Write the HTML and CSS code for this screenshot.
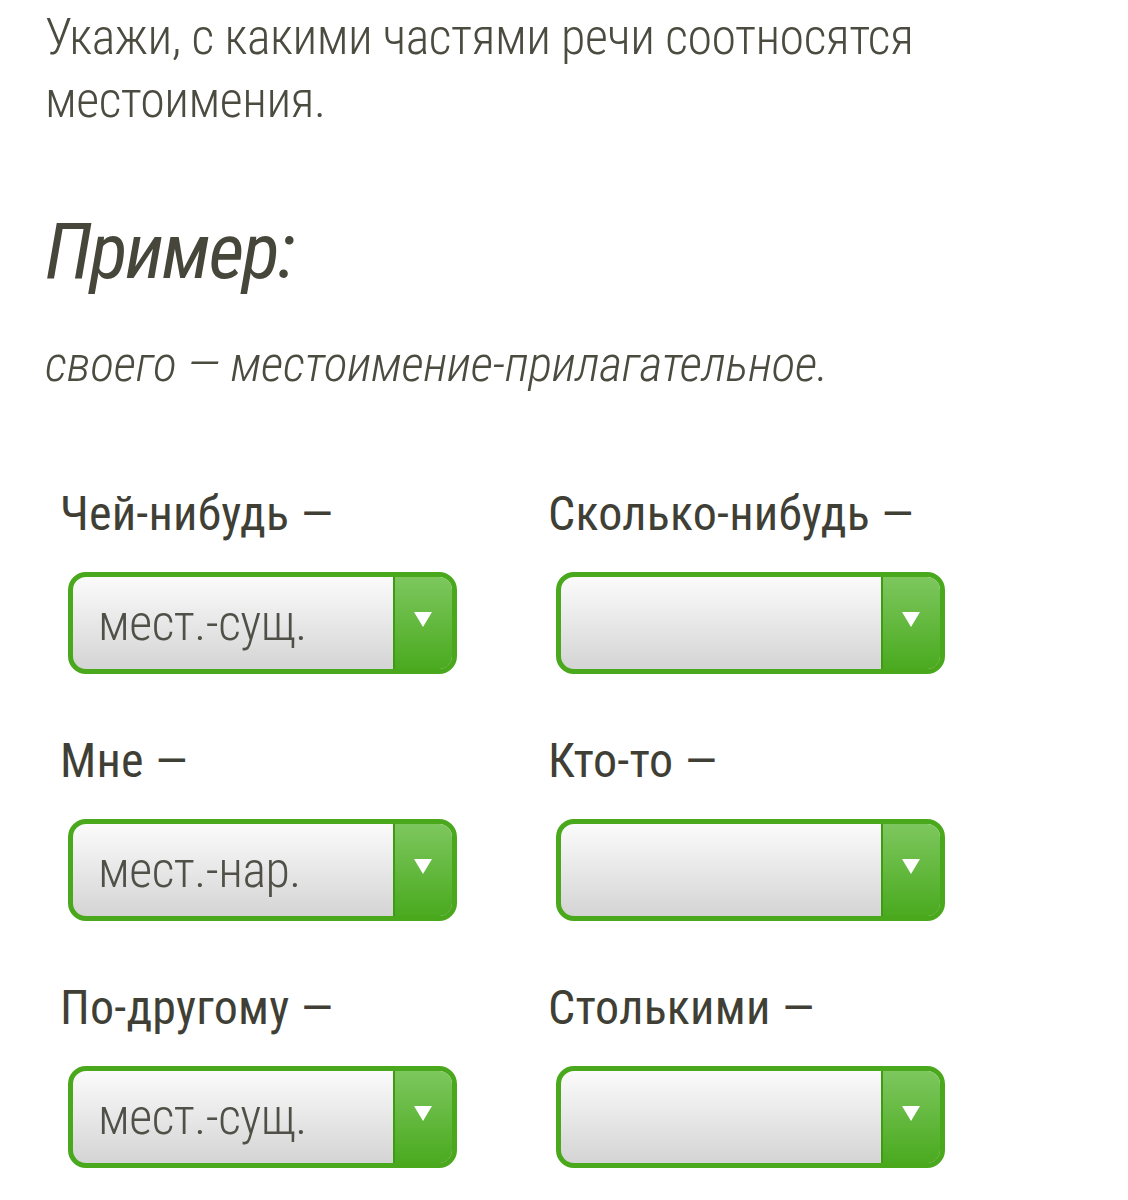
FILE: index.html
```html
<!DOCTYPE html>
<html lang="ru">
<head>
    <meta charset="UTF-8">
    <meta name="viewport" content="width=device-width, initial-scale=1.0">
    <title>Местоимения</title>
    <link rel="stylesheet" href="styles.css">
</head>
<body>
    <div class="task">
        <p class="question">Укажи, с какими частями речи соотносятся местоимения.</p>
        <h2 class="example-title">Пример:</h2>
        <p class="example">своего — местоимение-прилагательное.</p>

        <div class="answers">
            <div class="answer">
                <div class="label">Чей-нибудь —</div>
                <div class="select">
                    <span class="value">мест.-сущ.</span>
                    <span class="arrow"></span>
                </div>
            </div>
            <div class="answer">
                <div class="label">Сколько-нибудь —</div>
                <div class="select">
                    <span class="value"></span>
                    <span class="arrow"></span>
                </div>
            </div>
            <div class="answer">
                <div class="label">Мне —</div>
                <div class="select">
                    <span class="value">мест.-нар.</span>
                    <span class="arrow"></span>
                </div>
            </div>
            <div class="answer">
                <div class="label">Кто-то —</div>
                <div class="select">
                    <span class="value"></span>
                    <span class="arrow"></span>
                </div>
            </div>
            <div class="answer">
                <div class="label">По-другому —</div>
                <div class="select">
                    <span class="value">мест.-сущ.</span>
                    <span class="arrow"></span>
                </div>
            </div>
            <div class="answer">
                <div class="label">Столькими —</div>
                <div class="select">
                    <span class="value"></span>
                    <span class="arrow"></span>
                </div>
            </div>
        </div>
    </div>
</body>
</html>
```

FILE: styles.css
```css
body {
    margin: 0;
    background: #fff;
    font-family: "Roboto Condensed", Roboto, "Liberation Sans", sans-serif;
    color: #4b4b40;
}
.task {
    padding: 6px 0 0 45px;
}
.question {
    margin: 0;
    width: 900px;
    font-size: 50px;
    line-height: 63px;
    font-weight: 300;
    letter-spacing: -0.5px;
}
.example-title {
    margin: 75px 0 0 0;
    font-size: 78px;
    line-height: 90px;
    font-weight: 400;
    font-style: italic;
    letter-spacing: -2px;
    color: #46463a;
}
.example {
    margin: 36px 0 0 0;
    font-size: 50px;
    line-height: 63px;
    font-weight: 300;
    font-style: italic;
    letter-spacing: -0.3px;
}
.answers {
    margin: 90px 0 0 15px;
    display: grid;
    grid-template-columns: 488px 488px;
    row-gap: 59px;
}
.label {
    font-size: 48px;
    line-height: 56px;
    font-weight: 400;
    letter-spacing: 0.2px;
    color: #3f3f35;
}
.select {
    margin: 30px 0 0 8px;
    width: 389px;
    height: 102px;
    box-sizing: border-box;
    border: 5px solid #4aa81c;
    border-radius: 18px;
    overflow: hidden;
    display: flex;
    background: linear-gradient(#fbfbfb, #d4d4d4);
}
.value {
    flex: 1;
    padding-left: 25px;
    font-size: 50px;
    line-height: 92px;
    font-weight: 300;
    letter-spacing: -0.5px;
    color: #505048;
}
.arrow {
    width: 57px;
    border-left: 2px solid #3f9a15;
    background: linear-gradient(#7dc75e, #4aaa1f);
    position: relative;
}
.arrow::after {
    content: "";
    position: absolute;
    left: 19px;
    top: 35px;
    border-left: 9px solid transparent;
    border-right: 9px solid transparent;
    border-top: 15px solid #fff;
}
```
